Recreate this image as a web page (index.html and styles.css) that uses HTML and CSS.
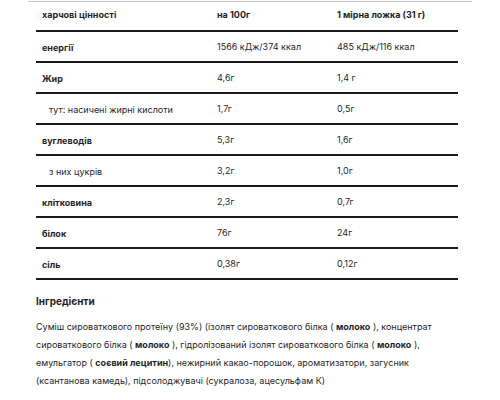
FILE: index.html
```html
<!DOCTYPE html>
<html lang="uk">
<head>
<meta charset="utf-8">
<link rel="stylesheet" href="styles.css">
</head>
<body>
<div class="panel">
  <div class="table">
    <div class="row head"><div class="c1">харчові цінності</div><div class="c2">на 100г</div><div class="c3">1 мірна ложка (31 г)</div></div>
    <div class="row"><div class="c1 b">енергії</div><div class="c2">1566 кДж/374 ккал</div><div class="c3">485 кДж/116 ккал</div></div>
    <div class="row"><div class="c1 b">Жир</div><div class="c2">4,6г</div><div class="c3">1,4 г</div></div>
    <div class="row"><div class="c1 sub">тут: насичені жирні кислоти</div><div class="c2">1,7г</div><div class="c3">0,5г</div></div>
    <div class="row"><div class="c1 b">вуглеводів</div><div class="c2">5,3г</div><div class="c3">1,6г</div></div>
    <div class="row"><div class="c1 sub">з них цукрів</div><div class="c2">3,2г</div><div class="c3">1,0г</div></div>
    <div class="row"><div class="c1 b">клітковина</div><div class="c2">2,3г</div><div class="c3">0,7г</div></div>
    <div class="row"><div class="c1 b">білок</div><div class="c2">76г</div><div class="c3">24г</div></div>
    <div class="row"><div class="c1 b">сіль</div><div class="c2">0,38г</div><div class="c3">0,12г</div></div>
  </div>
  <section class="ingredients">
    <h3 class="ing-title">Інгредієнти</h3>
    <p class="ing-text">Суміш сироваткового протеїну (93%) (ізолят сироваткового білка ( <b>молоко</b> ), концентрат сироваткового білка ( <b>молоко</b> ), гідролізований ізолят сироваткового білка ( <b>молоко</b> ), емульгатор ( <b>соєвий лецитин</b>), нежирний какао-порошок, ароматизатори, загусник (ксантанова камедь), підсолоджувачі (сукралоза, ацесульфам К)</p>
  </section>
</div>
</body>
</html>
```
FILE: styles.css
```css
html, body {
  margin: 0;
  padding: 0;
  background: #ffffff;
}
body {
  font-family: Inter, "Noto Sans", sans-serif;
  color: #1f1f1f;
  font-size: 9px;
}
.panel {
  margin: 1px 28px 0;
  border-top: 1px solid #c4c4c4;
}
.table {
  margin: 0 14px 0 8px;
}
.row {
  display: grid;
  grid-template-columns: 175px 120px 1fr;
  height: 29px;
  border-bottom: 2px solid #1a1a1a;
  align-items: center;
}
.row > div {
  padding: 2px 6px 0;
}
.row.head {
  height: 28px;
  font-weight: 700;
}
.row.head > div {
  padding: 0 6px 3px;
}
.b {
  font-weight: 700;
}
.row > .sub {
  padding-left: 13px;
  font-weight: 400;
}
.row > .c2, .row > .c3 {
  padding-top: 0;
}
.ingredients {
  padding: 0 8px;
}
.ing-title {
  margin: 14px 0 0;
  font-size: 10px;
  font-weight: 700;
  line-height: 14px;
}
.ing-text {
  margin: 10px 0 0;
  line-height: 18px;
  max-width: 400px;
}
.ing-text b {
  font-weight: 700;
}
```
